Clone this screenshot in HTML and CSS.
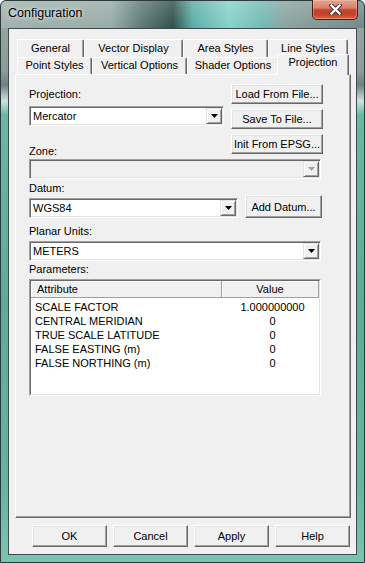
FILE: index.html
```html
<!DOCTYPE html>
<html lang="en">
<head>
  <meta charset="UTF-8" />
  <title>Configuration</title>
  <link rel="stylesheet" href="styles.css">
</head>
<body>

<div class="window">
  <div class="titlebar">
    <span class="title">Configuration</span>
    <div class="close">
      <svg width="13" height="11" viewBox="0 0 13 11">
        <path d="M2.5 1.5 L10.5 9.5 M10.5 1.5 L2.5 9.5" stroke="#3b2b2b" stroke-width="4.2" stroke-linecap="square" fill="none"/>
        <path d="M2.5 1.5 L10.5 9.5 M10.5 1.5 L2.5 9.5" stroke="#ffffff" stroke-width="2.4" stroke-linecap="square" fill="none"/>
      </svg>
    </div>
  </div>

  <div class="client">
    <div class="tabs">
      <div class="tab-row back">
        <div class="tab w-general">General</div>
        <div class="tab w-vector">Vector Display</div>
        <div class="tab w-area">Area Styles</div>
        <div class="tab w-line">Line Styles</div>
      </div>
      <div class="tab-row front">
        <div class="tab w-point">Point Styles</div>
        <div class="tab w-vertical">Vertical Options</div>
        <div class="tab w-shader">Shader Options</div>
        <div class="tab selected w-projection">Projection</div>
      </div>
    </div>

    <div class="panel">
      <div class="top-grid">
        <div class="left-col">
          <div class="label lbl-projection">Projection:</div>
          <div class="combo combo-projection">
            <span>Mercator</span>
            <span class="arrow"><svg width="7" height="4" viewBox="0 0 7 4"><polygon points="0,0 7,0 3.5,4" fill="#000"/></svg></span>
          </div>
          <div class="label lbl-zone">Zone:</div>
        </div>
        <div class="right-col">
          <button class="btn side-btn">Load From File...</button>
          <button class="btn side-btn">Save To File...</button>
          <button class="btn side-btn">Init From EPSG...</button>
        </div>
      </div>

      <div class="combo disabled combo-zone">
        <span></span>
        <span class="arrow"><svg width="7" height="4" viewBox="0 0 7 4"><polygon points="0,0 7,0 3.5,4" fill="#a0a0a0"/></svg></span>
      </div>

      <div class="datum-grid">
        <div>
          <div class="label lbl-datum">Datum:</div>
          <div class="combo combo-datum">
            <span>WGS84</span>
            <span class="arrow"><svg width="7" height="4" viewBox="0 0 7 4"><polygon points="0,0 7,0 3.5,4" fill="#000"/></svg></span>
          </div>
        </div>
        <button class="btn datum-btn">Add Datum...</button>
      </div>

      <div class="label lbl-planar">Planar Units:</div>
      <div class="combo combo-planar">
        <span>METERS</span>
        <span class="arrow"><svg width="7" height="4" viewBox="0 0 7 4"><polygon points="0,0 7,0 3.5,4" fill="#000"/></svg></span>
      </div>

      <div class="label lbl-params">Parameters:</div>
      <div class="list">
        <div class="list-inner">
          <div class="list-head">
            <div class="hcell h-attr">Attribute</div>
            <div class="hcell h-value">Value</div>
          </div>
          <div class="list-rows">
            <div class="row"><span>SCALE FACTOR</span><span class="val">1.000000000</span></div>
            <div class="row"><span>CENTRAL MERIDIAN</span><span class="val">0</span></div>
            <div class="row"><span>TRUE SCALE LATITUDE</span><span class="val">0</span></div>
            <div class="row"><span>FALSE EASTING (m)</span><span class="val">0</span></div>
            <div class="row"><span>FALSE NORTHING (m)</span><span class="val">0</span></div>
          </div>
        </div>
      </div>
    </div>

    <div class="footer">
      <button class="btn foot-btn">OK</button>
      <button class="btn foot-btn">Cancel</button>
      <button class="btn foot-btn">Apply</button>
      <button class="btn foot-btn">Help</button>
    </div>
  </div>
</div>

</body>
</html>
```

FILE: styles.css
```css
body {
  margin: 0;
  font-family: "Liberation Sans", Arial, sans-serif;
  font-size: 11px;
  color: #000;
  background-color: #ffffff;
}

.window {
  box-sizing: border-box;
  width: 365px;
  height: 563px;
  border: 1px solid #2e3a39;
  border-radius: 6px 6px 0 0;
  padding: 0 7px 7px;
  display: flex;
  flex-direction: column;
  background:
    linear-gradient(to bottom, rgba(255,255,255,0.18), rgba(255,255,255,0) 27px) top / 100% 27px no-repeat,
    linear-gradient(90deg, #9fb2ae 0, #98aca8 110px, #5d7a77 140px, #31504d 172px, #5caea6 192px, #86d2ca 228px, #72bab2 262px, #8ca3a0 285px, #7e9390 330px, #72878a 365px) top / 100% 27px no-repeat,
    linear-gradient(to bottom, #9aaaa6 0, #8b9c99 70px, #6f817f 84px, #cde2dd 100px, #66baa2 114px, #5aae98 300px, #62b59e 480px, #78c6b2 563px);
}

/* title bar */

.titlebar {
  height: 27px;
  display: flex;
  align-items: flex-start;
}

.title {
  margin-top: 5px;
  font-size: 12.5px;
  line-height: 15px;
  color: #000;
  text-shadow: 0 0 6px rgba(255,255,255,0.7), 0 0 3px rgba(255,255,255,0.6);
}

.close {
  box-sizing: border-box;
  margin-left: auto;
  margin-right: -1px;
  margin-top: -1px;
  width: 46px;
  height: 20px;
  border: 1px solid #4a1c14;
  border-top: none;
  border-radius: 0 0 5px 5px;
  background: linear-gradient(to bottom, #e6a491 0, #d7826d 42%, #c3432a 52%, #c5412a 78%, #dc6e48 100%);
  box-shadow: inset 0 0 0 1px rgba(255,220,200,0.35);
  display: flex;
  align-items: center;
  justify-content: center;
}

.close svg {
  margin-top: -1px;
}

/* client area */

.client {
  flex: 1;
  background-color: #f0f0f0;
  border: 1px solid #3e4b4a;
  padding: 10px 6px 0 6px;
}

.tabs {
  height: 35px;
  padding-left: 2px;
}

.tab-row {
  display: flex;
}

.tab {
  box-sizing: border-box;
  height: 18px;
  border: 1px solid;
  border-color: #ffffff #696969 transparent #ffffff;
  border-bottom: none;
  border-radius: 2px 2px 0 0;
  box-shadow: inset -1px 0 0 #a0a0a0;
  background-color: #f0f0f0;
  text-align: center;
  line-height: 15px;
  padding-top: 1px;
  white-space: nowrap;
}

.tab-row.front .tab {
  height: 17px;
  padding-top: 0;
}

.tab-row.front .tab.selected {
  position: relative;
  z-index: 2;
  margin-top: -3px;
  height: 21px;
  padding-top: 0;
  margin-bottom: -1px;
}

.w-general { width: 67px; }
.w-vector { width: 99px; }
.w-area { width: 85px; }
.w-line { width: 80px; }
.w-point { width: 75px; }
.w-vertical { width: 95px; }
.w-shader { width: 92px; }
.w-projection { width: 72px; margin-left: -2px; }

.panel {
  box-sizing: border-box;
  width: 336px;
  height: 444px;
  border: 1px solid;
  border-color: #ffffff #696969 #696969 #ffffff;
  box-shadow: inset -1px -1px 0 #a0a0a0;
  padding: 9px 28px 0 13px;
}

.label {
  line-height: 13px;
  white-space: nowrap;
}

.top-grid {
  display: grid;
  grid-template-columns: 195px 92px;
  column-gap: 7px;
}

.lbl-projection { margin-top: 4px; }
.combo-projection { margin-top: 5px; }
.lbl-zone { margin-top: 19px; }

.right-col {
  display: flex;
  flex-direction: column;
  gap: 5px;
}

/* controls */

.btn {
  box-sizing: border-box;
  font-family: inherit;
  font-size: 11px;
  color: #000;
  background-color: #f0f0f0;
  border: 1px solid;
  border-color: #ffffff #696969 #696969 #ffffff;
  box-shadow: inset -1px -1px 0 #a0a0a0, inset 1px 1px 0 #e3e3e3;
  padding: 0;
  margin: 0;
  white-space: nowrap;
}

.side-btn {
  height: 20px;
  width: 92px;
}

.combo {
  box-sizing: border-box;
  height: 20px;
  border: 1px solid;
  border-color: #a0a0a0 #ffffff #ffffff #a0a0a0;
  box-shadow: inset 1px 1px 0 #696969, inset -1px -1px 0 #e3e3e3;
  background-color: #ffffff;
  display: flex;
  align-items: center;
  padding-left: 3px;
  white-space: nowrap;
}

.combo .arrow {
  box-sizing: border-box;
  margin-left: auto;
  margin-right: 1px;
  width: 16px;
  height: 16px;
  background-color: #f0f0f0;
  border: 1px solid;
  border-color: #e3e3e3 #696969 #696969 #e3e3e3;
  box-shadow: inset 1px 1px 0 #ffffff, inset -1px -1px 0 #a0a0a0;
  display: flex;
  align-items: center;
  justify-content: center;
}

.combo.disabled {
  background-color: #f0f0f0;
}

.combo-zone {
  width: 292px;
  margin-top: 1px;
}

.datum-grid {
  display: grid;
  grid-template-columns: 209px 77px;
  column-gap: 7px;
  align-items: end;
}

.lbl-datum { margin-top: 3px; }
.combo-datum { margin-top: 3px; }

.datum-btn {
  height: 23px;
  width: 77px;
}

.lbl-planar { margin-top: 7px; }

.combo-planar {
  width: 292px;
  margin-top: 3px;
}

.lbl-params { margin-top: 2px; }

/* parameter list */

.list {
  box-sizing: border-box;
  width: 292px;
  height: 117px;
  margin-top: 3px;
  border: 1px solid;
  border-color: #a0a0a0 #ffffff #ffffff #a0a0a0;
  background-color: #ffffff;
}

.list-inner {
  box-sizing: border-box;
  height: 100%;
  border: 1px solid;
  border-color: #696969 #e3e3e3 #e3e3e3 #696969;
}

.list-head {
  display: grid;
  grid-template-columns: 191px 97px;
  height: 17px;
}

.hcell {
  box-sizing: border-box;
  background-color: #f0f0f0;
  border-right: 1px solid #a0a0a0;
  border-bottom: 1px solid #a0a0a0;
  box-shadow: inset 1px 1px 0 #ffffff;
  line-height: 15px;
  padding-top: 1px;
}

.h-attr { padding-left: 6px; }
.h-value { text-align: center; }

.list-rows {
  padding-top: 2px;
}

.row {
  display: grid;
  grid-template-columns: 191px 97px;
  line-height: 14px;
  padding-left: 4px;
  white-space: nowrap;
}

.row .val {
  text-align: center;
  margin-left: -4px;
}

/* footer */

.footer {
  display: flex;
  justify-content: flex-end;
  gap: 6px;
  margin-top: 7px;
}

.foot-btn {
  width: 75px;
  height: 22px;
}
```
